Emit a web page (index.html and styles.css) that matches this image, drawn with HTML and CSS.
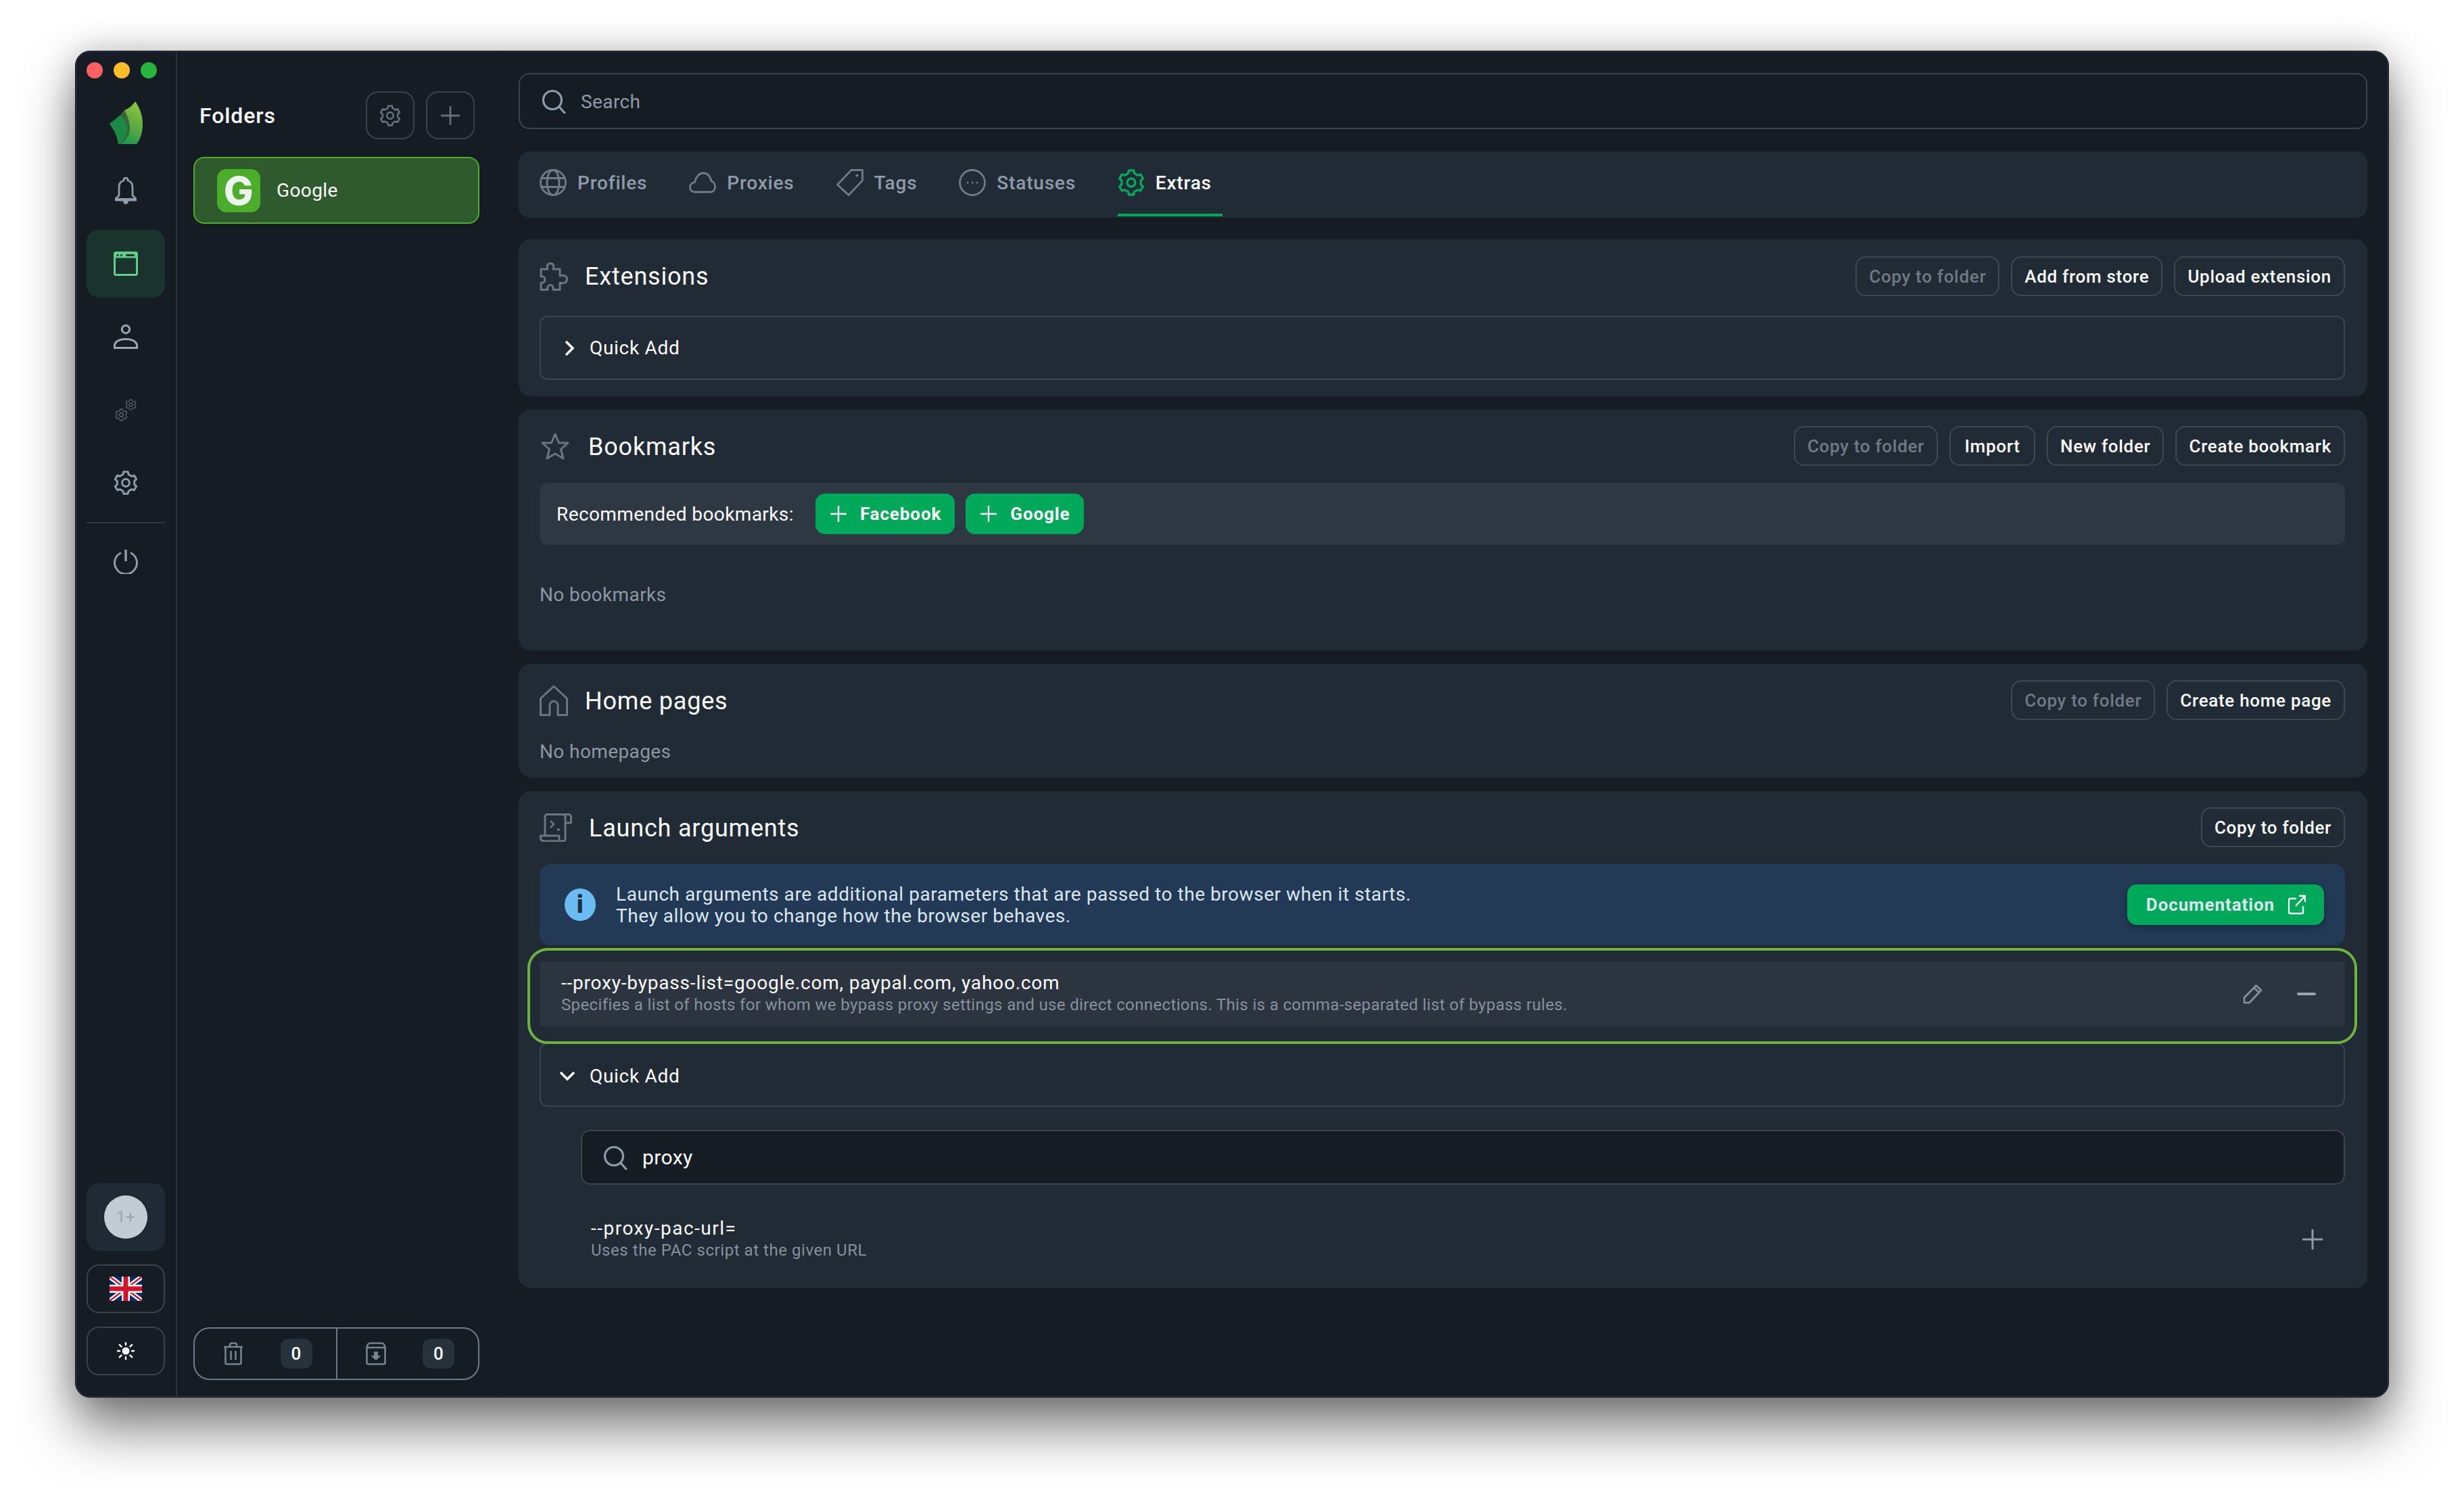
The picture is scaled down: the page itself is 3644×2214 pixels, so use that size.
FILE: index.html
```html
<!DOCTYPE html>
<html lang="en">
<head>
    <meta charset="UTF-8">
    <title>Folders - Extras</title>
    <link rel="stylesheet" href="styles.css">
</head>
<body>
    <svg class="sprite" width="0" height="0">
        <defs>
            <linearGradient id="leaf-a" x1="0.7" y1="0" x2="0.3" y2="1">
                <stop offset="0" stop-color="#8fc640"/>
                <stop offset="0.55" stop-color="#5aa843"/>
                <stop offset="1" stop-color="#14984f"/>
            </linearGradient>
            <symbol id="i-gear" viewBox="0 0 24 24">
                <path fill="none" stroke="currentColor" stroke-width="2" stroke-linejoin="round" d="M9.9 1.2H14.1L14.8 3.87 17.64 5.51 20.3 4.8 22.4 8.41 20.44 10.36V13.64L22.4 15.59 20.3 19.2 17.64 18.49 14.8 20.13 14.1 22.8H9.9L9.2 20.13 6.36 18.49 3.7 19.2 1.6 15.59 3.56 13.64V10.36L1.6 8.41 3.7 4.8 6.36 5.51 9.2 3.87Z"/>
                <circle cx="12" cy="12" r="3.6" fill="none" stroke="currentColor" stroke-width="2"/>
            </symbol>
            <symbol id="i-search" viewBox="0 0 36 36">
                <circle cx="16" cy="16" r="13.5" fill="none" stroke="currentColor" stroke-width="3.2"/>
                <path d="M26 26l8 9" fill="none" stroke="currentColor" stroke-width="3.2" stroke-linecap="round"/>
            </symbol>
            <symbol id="i-plus" viewBox="0 0 30 30">
                <path d="M15 1v28M1 15h28" fill="none" stroke="currentColor" stroke-width="3" stroke-linecap="round"/>
            </symbol>
        </defs>
    </svg>

    <div class="window">
        <nav class="rail">
            <div class="lights">
                <span class="light red"></span>
                <span class="light yellow"></span>
                <span class="light green"></span>
            </div>
            <svg class="logo" viewBox="0 0 49 64" width="49" height="64">
                <path d="M38 0C45 10 49 21 49 33 49 45 46 55 40 63H13C20 58 25 52 26 44 27 33 23 22 22 13 28 11 34 6 38 0Z" fill="url(#leaf-a)"/>
                <path d="M0 33 16 20C23 25 27 33 26 44 25 52 20 58 13 64 12 55 9 47 5 41Z" fill="#1c8a44"/>
                <path d="M16 20C23 25 27 33 26 44 25 52 20 58 13 64 22 60 30 52 30 40 30 32 28 24 22 13Z" fill="#3b6534"/>
            </svg>
            <div class="rail-item">
                <svg width="32" height="40" viewBox="0 0 32 40"><path d="M16 1c1.800 0 3 1.300 3 3v1c5 1.300 7 5 7 10v12l5 5v2H1v-2l5-5V15C6 10 8 6.300 13 5V4c0-1.700 1.200-3 3-3z" fill="none" stroke="#8f9ba8" stroke-width="2.800" stroke-linejoin="round"/><path d="M1 31h30v3H1zM12 35h8c0 3-1.500 5-4 5s-4-2-4-5z" fill="#8f9ba8"/></svg>
            </div>
            <div class="rail-item active">
                <svg width="36" height="36" viewBox="0 0 36 36"><rect x="1.500" y="1.500" width="33" height="33" rx="2" fill="none" stroke="#5fd08a" stroke-width="3"/><path d="M1.500 9.500h33V3a1.500 1.500 0 0 0-1.500-1.500H3A1.500 1.500 0 0 0 1.500 3z" fill="#5fd08a"/><circle cx="6" cy="5.500" r="1.600" fill="#1a332c"/><circle cx="11.500" cy="5.500" r="1.600" fill="#1a332c"/><rect x="18" y="4" width="13" height="3" rx="1.500" fill="#1a332c"/></svg>
            </div>
            <div class="rail-item">
                <svg width="36" height="36" viewBox="0 0 36 36"><circle cx="18" cy="7" r="5.700" fill="none" stroke="#9aa6b2" stroke-width="3"/><path d="M1.500 34.500V31C1.500 25 9 21.500 18 21.500S34.500 25 34.500 31v3.500z" fill="none" stroke="#9aa6b2" stroke-width="3"/></svg>
            </div>
            <div class="rail-item">
                <span class="gears">
                    <svg class="gear-lg" width="19" height="19"><use href="#i-gear"/></svg>
                    <svg class="gear-sm" width="17" height="17"><use href="#i-gear"/></svg>
                </span>
            </div>
            <div class="rail-item">
                <svg class="rail-gear" width="36" height="36"><use href="#i-gear"/></svg>
            </div>
            <div class="rail-sep"></div>
            <div class="rail-item">
                <svg width="36" height="36" viewBox="0 0 36 36"><path d="M11 4.500a16.500 16.500 0 1 0 14 0" fill="none" stroke="#8f9ba8" stroke-width="3"/><path d="M18 0v17" stroke="#8f9ba8" stroke-width="3.500" fill="none"/></svg>
            </div>
            <div class="rail-bottom">
                <div class="avatar-box"><span class="avatar">1+</span></div>
                <div class="rail-btn">
                    <svg class="flag" viewBox="0 0 48 36" width="48" height="36">
                        <rect width="48" height="36" rx="2" fill="#0a2a6e"/>
                        <path d="M0 0 48 36M48 0 0 36" stroke="#fff" stroke-width="7"/>
                        <path d="M0 0 48 36M48 0 0 36" stroke="#cf142b" stroke-width="2.400"/>
                        <path d="M24 0v36M0 18h48" stroke="#fff" stroke-width="12"/>
                        <path d="M24 0v36M0 18h48" stroke="#cf142b" stroke-width="7"/>
                    </svg>
                </div>
                <div class="rail-btn">
                    <svg width="26" height="26" viewBox="0 0 26 26"><circle cx="13" cy="13" r="5.500" fill="#fff"/><path d="M13 0v4M13 22v4M0 13h4M22 13h4M3.800 3.800l2.800 2.800M19.400 19.400l2.800 2.800M22.200 3.800l-2.800 2.800M6.600 19.400l-2.800 2.800" stroke="#fff" stroke-width="2.400" stroke-linecap="round"/></svg>
                </div>
            </div>
        </nav>

        <aside class="folders">
            <div class="folders-head">
                <h2>Folders</h2>
                <button class="square-btn"><svg width="32" height="32"><use href="#i-gear"/></svg></button>
                <button class="square-btn"><svg width="28" height="28"><use href="#i-plus"/></svg></button>
            </div>
            <div class="folder-item">
                <span class="folder-icon">G</span>
                <span>Google</span>
            </div>
            <div class="folders-foot">
                <div class="foot-cell">
                    <svg width="30" height="34" viewBox="0 0 30 34"><path d="M1 7h28M10 7V4a2.500 2.500 0 0 1 2.500-2.500h5A2.500 2.500 0 0 1 20 4v3M3.500 7v24a1.500 1.500 0 0 0 1.500 1.500h20a1.500 1.500 0 0 0 1.500-1.500V7M11.500 13v13M18.500 13v13" fill="none" stroke="#77838f" stroke-width="2.600"/></svg>
                    <span class="count">0</span>
                </div>
                <div class="foot-cell">
                    <svg width="30" height="34" viewBox="0 0 30 34"><path d="M1.500 8.500C1.500 4 4 1.500 7 1.500h16c3 0 5.500 2.500 5.500 7v22a2 2 0 0 1-2 2h-23a2 2 0 0 1-2-2zM1.500 8h27" fill="none" stroke="#77838f" stroke-width="2.600"/><path d="M12 14h6v6h4.500L15 27l-7.500-7H12z" fill="#77838f"/></svg>
                    <span class="count">0</span>
                </div>
            </div>
        </aside>

        <main class="main">
            <div class="search-bar">
                <svg width="36" height="36"><use href="#i-search"/></svg>
                <span>Search</span>
            </div>

            <div class="tabs">
                <div class="tab">
                    <svg width="40" height="40" viewBox="0 0 40 40"><g fill="none" stroke="currentColor" stroke-width="2.800"><circle cx="20" cy="20" r="18.500"/><ellipse cx="20" cy="20" rx="9" ry="18.500"/><path d="M3 13.500h34M3 26.500h34"/></g></svg>
                    <span>Profiles</span>
                </div>
                <div class="tab">
                    <svg width="40" height="40" viewBox="0 0 40 40"><path d="M9 34C4 34 1.500 31 1.500 27c0-4 3-7 7-7.500C10 11.500 15 6 21 6c7 0 11 6 12 12 3.500 1 5.500 4.500 5.500 8s-2 8-7.500 8z" fill="none" stroke="currentColor" stroke-width="2.800" stroke-linejoin="round"/></svg>
                    <span>Proxies</span>
                </div>
                <div class="tab">
                    <svg width="40" height="40" viewBox="0 0 40 40"><path d="M22 1.500H38.500V17L18 38.500 1.500 23z" fill="none" stroke="currentColor" stroke-width="2.800" stroke-linejoin="round"/><circle cx="30.500" cy="9.500" r="2" fill="currentColor"/></svg>
                    <span>Tags</span>
                </div>
                <div class="tab">
                    <svg width="40" height="40" viewBox="0 0 40 40"><circle cx="20" cy="20" r="18.500" fill="none" stroke="currentColor" stroke-width="2.800"/><circle cx="13" cy="20" r="1.500" fill="currentColor"/><circle cx="20" cy="20" r="1.500" fill="currentColor"/><circle cx="27" cy="20" r="1.500" fill="currentColor"/></svg>
                    <span>Statuses</span>
                </div>
                <div class="tab active">
                    <svg width="40" height="40"><use href="#i-gear"/></svg>
                    <span>Extras</span>
                </div>
            </div>

            <section class="card first">
                <div class="card-head">
                    <svg class="head-icon" width="42" height="42" viewBox="0 0 42 42"><path d="M2 10h10c-2-5 0-8.500 4-8.500s6 3.500 4 8.500h10v10c5-2 10.500 0 10.500 5S35 32 30 30v10.500H20c1-4-1-7-4-7s-5 3-4 7H2V30c3 1 6-1 6-4.500S5 20 2 21z" fill="none" stroke="currentColor" stroke-width="3" stroke-linejoin="round"/></svg>
                    <h3 class="ext-title">Extensions</h3>
                    <div class="head-btns">
                        <button class="btn off">Copy to folder</button>
                        <button class="btn">Add from store</button>
                        <button class="btn">Upload extension</button>
                    </div>
                </div>
                <div class="quick-add">
                    <svg class="chev" width="16" height="24" viewBox="0 0 16 24"><path d="M3 2l10 10L3 22" fill="none" stroke="#fff" stroke-width="3.600"/></svg>
                    <span>Quick Add</span>
                </div>
            </section>

            <section class="card">
                <div class="card-head">
                    <svg class="head-icon star-icon" width="42" height="40" viewBox="0 0 42 40"><path d="M21 2l5.500 13H40l-10.500 9.500L33 38l-12-7-12 7 3.500-13.500L2 15h13.500z" fill="none" stroke="currentColor" stroke-width="3" stroke-linejoin="round"/></svg>
                    <h3 class="mark-title">Bookmarks</h3>
                    <div class="head-btns">
                        <button class="btn off">Copy to folder</button>
                        <button class="btn btn-import">Import</button>
                        <button class="btn">New folder</button>
                        <button class="btn">Create bookmark</button>
                    </div>
                </div>
                <div class="recommended">
                    <span>Recommended bookmarks:</span>
                    <button class="btn-green"><svg width="24" height="24"><use href="#i-plus"/></svg>Facebook</button>
                    <button class="btn-green"><svg width="24" height="24"><use href="#i-plus"/></svg>Google</button>
                </div>
                <p class="empty bookmarks-empty">No bookmarks</p>
            </section>

            <section class="card">
                <div class="card-head">
                    <svg class="head-icon" width="42" height="46" viewBox="0 0 42 46"><path d="M21 2L40.500 20V44.500H27V30a6 6 0 0 0-12 0V44.500H1.500V20z" fill="none" stroke="currentColor" stroke-width="3" stroke-linejoin="round"/></svg>
                    <h3 class="home-title">Home pages</h3>
                    <div class="head-btns">
                        <button class="btn off">Copy to folder</button>
                        <button class="btn">Create home page</button>
                    </div>
                </div>
                <p class="empty homepages-empty">No homepages</p>
            </section>

            <section class="card">
                <div class="card-head">
                    <svg class="head-icon" width="48" height="42" viewBox="0 0 48 42"><path d="M8 33V5a3.500 3.500 0 0 1 3.500-3.500H43A3.500 3.500 0 0 1 46.500 5v9H38V5A3.500 3.500 0 0 0 34.500 1.500M38 14v24a3 3 0 0 1-3 3H6a4.500 4.500 0 0 1-4.500-4.500V33H29v4.500a3.500 3.500 0 0 0 6 3" fill="none" stroke="currentColor" stroke-width="3" stroke-linejoin="round"/><path d="M16 11l5 5-5 5" fill="none" stroke="currentColor" stroke-width="2.600"/><circle cx="28" cy="24" r="2" fill="currentColor"/></svg>
                    <h3 class="args-title">Launch arguments</h3>
                    <div class="head-btns">
                        <button class="btn">Copy to folder</button>
                    </div>
                </div>
                <div class="info">
                    <span class="info-icon">i</span>
                    <p>Launch arguments are additional parameters that are passed to the browser when it starts.<br>They allow you to change how the browser behaves.</p>
                    <button class="btn-green doc-btn">Documentation
                        <svg width="26" height="30" viewBox="0 0 26 30"><path d="M12 6H3a2 2 0 0 0-2 2v18a2 2 0 0 0 2 2h17a2 2 0 0 0 2-2v-9M11 17L24 3M16 2h9v9" fill="none" stroke="#fff" stroke-width="2.400"/></svg>
                    </button>
                </div>
                <div class="arg-wrap">
                    <div class="arg-row">
                        <div class="arg-text">
                            <div class="arg-name">--proxy-bypass-list=google.com, paypal.com, yahoo.com</div>
                            <div class="arg-desc">Specifies a list of hosts for whom we bypass proxy settings and use direct connections. This is a comma-separated list of bypass rules.</div>
                        </div>
                        <svg class="edit-icon" width="30" height="30" viewBox="0 0 30 30"><path d="M2 28V20.500L19.500 2.500 27 9.500 9.500 28zM16.500 6l7.500 7" fill="none" stroke="#87929e" stroke-width="2.600" stroke-linejoin="round"/></svg>
                        <span class="minus"></span>
                    </div>
                    <div class="arg-outline"></div>
                </div>
                <div class="quick-add open">
                    <svg class="chev" width="24" height="16" viewBox="0 0 24 16"><path d="M2 3l10 10L22 3" fill="none" stroke="#fff" stroke-width="3.600"/></svg>
                    <span>Quick Add</span>
                </div>
                <div class="search-inner">
                    <svg width="36" height="36"><use href="#i-search"/></svg>
                    <span>proxy</span>
                </div>
                <div class="result">
                    <div class="arg-text">
                        <div class="arg-name">--proxy-pac-url=</div>
                        <div class="arg-desc">Uses the PAC script at the given URL</div>
                    </div>
                    <svg class="result-plus" width="30" height="30"><use href="#i-plus"/></svg>
                </div>
            </section>
        </main>
    </div>
</body>
</html>
```

FILE: styles.css
```css
* {
    box-sizing: border-box;
}

html, body {
    height: 100%;
}

body {
    margin: 0;
    padding: 75px 111px 147px;
    background-color: #ffffff;
    font-family: Roboto, "Noto Sans", sans-serif;
    font-size: 28px;
    letter-spacing: 0.4px;
    color: #ffffff;
}

h2, h3, p {
    margin: 0;
    font-weight: 400;
}

button {
    font-family: inherit;
    color: inherit;
    background: none;
    cursor: pointer;
}

svg {
    display: block;
    flex-shrink: 0;
}

.sprite {
    position: absolute;
}

.window {
    display: flex;
    height: 100%;
    background-color: #151c24;
    border: 1px solid #0a0d11;
    border-radius: 22px;
    box-shadow: inset 0 0 0 1px #333c47, 0 46px 80px rgba(0, 0, 0, 0.5), 0 0 50px rgba(0, 0, 0, 0.22);
    overflow: hidden;
}

/* left rail */
.rail {
    width: 150px;
    flex-shrink: 0;
    display: flex;
    flex-direction: column;
    align-items: center;
    border-right: 2px solid #2b333e;
    padding: 0 15px;
}

.lights {
    display: flex;
    gap: 16px;
    align-self: flex-start;
    margin-top: 16px;
    padding-left: 1px;
}

.light {
    width: 24px;
    height: 24px;
    border-radius: 50%;
}

.red { background-color: #ff6163; }
.yellow { background-color: #ffbd2c; }
.green { background-color: #28b53c; }

.logo {
    margin-top: 34px;
    margin-bottom: 18px;
}

.rail-item {
    width: 116px;
    height: 100px;
    display: flex;
    align-items: center;
    justify-content: center;
    border-radius: 18px;
    flex-shrink: 0;
    margin-bottom: 8px;
    color: #8f9ba8;
}

.rail-item.active {
    background-color: #1a332c;
}

.gears {
    position: relative;
    width: 32px;
    height: 33px;
    color: #525c67;
}

.gear-lg {
    position: absolute;
    left: 0;
    bottom: 0;
}

.gear-sm {
    position: absolute;
    right: 0;
    top: 0;
}

.rail-sep {
    width: 116px;
    height: 2px;
    margin-bottom: 7px;
    background-color: #2e3742;
    flex-shrink: 0;
}

.rail-bottom {
    margin-top: auto;
    display: flex;
    flex-direction: column;
    gap: 20px;
    padding-bottom: 32px;
}

.avatar-box {
    width: 116px;
    height: 100px;
    background-color: #202a34;
    border-radius: 18px;
    display: flex;
    align-items: center;
    justify-content: center;
}

.avatar {
    width: 64px;
    height: 64px;
    border-radius: 50%;
    background-color: #c1cdd3;
    color: #98a4ae;
    font-size: 24px;
    display: flex;
    align-items: center;
    justify-content: center;
}

.rail-btn {
    width: 116px;
    height: 72px;
    border: 2px solid #39424d;
    border-radius: 18px;
    display: flex;
    align-items: center;
    justify-content: center;
}

/* folders column */
.folders {
    width: 475px;
    flex-shrink: 0;
    display: flex;
    flex-direction: column;
    padding: 0 26px 0 24px;
    border-right: 2px solid #181f27;
}

.folders-head {
    display: flex;
    align-items: center;
    gap: 17px;
    padding: 59px 7px 0 9px;
    height: 130px;
}

.folders-head h2 {
    font-size: 32px;
    font-weight: 500;
    letter-spacing: 0.9px;
    margin-right: auto;
}

.square-btn {
    width: 72px;
    height: 71px;
    border: 2px solid #38414c;
    border-radius: 18px;
    display: flex;
    align-items: center;
    justify-content: center;
    color: #646f7b;
}

.folder-item {
    margin-top: 26px;
    height: 99px;
    display: flex;
    align-items: center;
    gap: 24px;
    padding-left: 33px;
    background-color: #2e5a2d;
    border: 2px solid #4dad2c;
    border-radius: 16px;
    font-size: 28px;
}

.folder-icon {
    width: 64px;
    height: 64px;
    border-radius: 14px;
    background-color: #4cad2a;
    font-family: Inter, sans-serif;
    font-size: 58px;
    font-weight: 800;
    display: flex;
    align-items: center;
    justify-content: center;
    color: #eef5ee;
}

.folders-foot {
    margin-top: auto;
    margin-bottom: 25px;
    height: 78px;
    display: flex;
    border: 2px solid #6f7b88;
    border-radius: 24px;
}

.foot-cell {
    flex: 1;
    display: flex;
    align-items: center;
    justify-content: space-between;
    padding: 0 35px 0 42px;
}

.foot-cell + .foot-cell {
    border-left: 2px solid #6f7b88;
}

.count {
    width: 47px;
    height: 44px;
    border-radius: 12px;
    background-color: #28323c;
    font-size: 26px;
    font-weight: 500;
    display: flex;
    align-items: center;
    justify-content: center;
}

/* main area */
.main {
    flex: 1;
    min-width: 0;
    padding: 32px 31px 0 30px;
}

.search-bar {
    height: 83px;
    display: flex;
    align-items: center;
    gap: 22px;
    padding-left: 32px;
    border: 2px solid #39434e;
    border-radius: 16px;
    color: #8f9ba8;
}

.search-bar span {
    padding-top: 2px;
}

.tabs {
    margin-top: 33px;
    height: 98px;
    display: flex;
    padding-left: 31px;
    background-color: #212b35;
    border-radius: 16px;
}

.tab {
    height: 96px;
    display: flex;
    align-items: center;
    gap: 16px;
    padding-right: 16px;
    margin-right: 46px;
    border-bottom: 4px solid transparent;
    color: #8f9ba8;
    font-weight: 500;
    letter-spacing: 0.8px;
}

.tab svg {
    color: #6f7b88;
}

.tab.active {
    color: #ffffff;
    border-bottom-color: #00a859;
}

.tab.active svg {
    color: #00a859;
}

.card {
    margin-top: 20px;
    padding: 24px 33px 24px 31px;
    background-color: #212b35;
    border-radius: 18px;
}

.card.first {
    margin-top: 32px;
    padding-top: 25px;
}

.card-head {
    height: 59px;
    display: flex;
    align-items: center;
}

.head-icon {
    color: #6a7581;
}

.star-icon {
    margin-left: 2px;
}

.card-head h3 {
    font-size: 36px;
    font-weight: 400;
    letter-spacing: 0.8px;
    margin-top: 2px;
}

.ext-title { margin-left: 25px; }
.mark-title { margin-left: 28px; }
.home-title { margin-left: 25px; }
.args-title { margin-left: 25px; }

.card-head .ext-title {
    margin-top: 0;
}

.head-btns {
    margin-left: auto;
    display: flex;
    gap: 17px;
}

.btn {
    height: 59px;
    padding: 0 18px;
    border: 2px solid #3d4853;
    border-radius: 15px;
    font-size: 26px;
    font-weight: 500;
    letter-spacing: 0.7px;
    white-space: nowrap;
}

.btn.off {
    color: #6e7a86;
}

.btn-import {
    min-width: 127px;
}

.quick-add {
    margin-top: 29px;
    height: 95px;
    display: flex;
    align-items: center;
    border: 2px solid #3a444f;
    border-radius: 12px;
    padding-left: 34px;
    letter-spacing: 0.7px;
}

.quick-add .chev {
    margin-right: 22px;
}

.quick-add.open {
    margin-top: 24px;
    padding: 3px 0 0 27px;
}

.quick-add.open .chev {
    margin-right: 21px;
}

.recommended {
    margin-top: 25px;
    height: 92px;
    display: flex;
    align-items: center;
    padding-left: 25px;
    background-color: #2e3843;
    border-radius: 12px;
}

.recommended span {
    margin-right: 32px;
}

.btn-green {
    height: 60px;
    display: flex;
    align-items: center;
    gap: 20px;
    padding: 0 20px 0 22px;
    margin-right: 16px;
    background-color: #00a859;
    border: 0;
    border-radius: 14px;
    font-size: 26px;
    font-weight: 700;
    letter-spacing: 0.9px;
}

.empty {
    color: #8c97a3;
    line-height: 36px;
}

.bookmarks-empty {
    margin-top: 56px;
    padding-bottom: 40px;
}

.homepages-empty {
    margin-top: 29px;
    margin-bottom: -4px;
}

.info {
    margin-top: 25px;
    height: 120px;
    display: flex;
    align-items: center;
    padding: 0 31px 0 37px;
    background-color: #223a55;
    border-radius: 16px;
    color: #dbe7ef;
}

.info p {
    line-height: 32px;
    letter-spacing: 0.55px;
    margin: 2px auto 0 30px;
}

.info-icon {
    width: 46px;
    height: 48px;
    border-radius: 50%;
    background-color: #6bbcf3;
    color: #1c2f44;
    font-size: 36px;
    font-weight: 900;
    display: flex;
    align-items: center;
    justify-content: center;
}

.doc-btn {
    margin: 0;
    gap: 20px;
    padding: 0 27px 0 28px;
    box-shadow: 0 4px 8px rgba(0, 0, 0, 0.25);
}

.arg-wrap {
    position: relative;
    margin-top: 24px;
}

.arg-row {
    height: 96px;
    display: flex;
    align-items: center;
    padding: 0 43px 0 32px;
    background-color: #2b343f;
}

.arg-text {
    margin-right: auto;
}

.arg-name {
    line-height: 32px;
    letter-spacing: 0.8px;
}

.arg-desc {
    font-size: 24px;
    line-height: 32px;
    letter-spacing: 0.37px;
    color: #86919d;
}

.edit-icon {
    margin-right: 50px;
}

.minus {
    width: 28px;
    height: 4px;
    border-radius: 2px;
    background-color: #9aa5b0;
}

.arg-outline {
    position: absolute;
    left: -18px;
    right: -18px;
    top: -20px;
    bottom: -26px;
    border: 4px solid #6cb43c;
    border-radius: 30px;
    pointer-events: none;
}

.search-inner {
    margin: 34px 0 0 61px;
    height: 81px;
    display: flex;
    align-items: center;
    gap: 22px;
    padding-left: 31px;
    background-color: #151c24;
    border: 2px solid #3a444f;
    border-radius: 14px;
    font-size: 30px;
    color: #ffffff;
}

.search-inner svg {
    color: #8f9ba8;
}

.result {
    margin-top: 49px;
    padding: 0 33px 16px 76px;
    display: flex;
    align-items: center;
}

.result .arg-name {
    letter-spacing: 1.5px;
}

.result .arg-desc {
    letter-spacing: 0.55px;
}

.result-plus {
    color: #8f9ba8;
}
```
